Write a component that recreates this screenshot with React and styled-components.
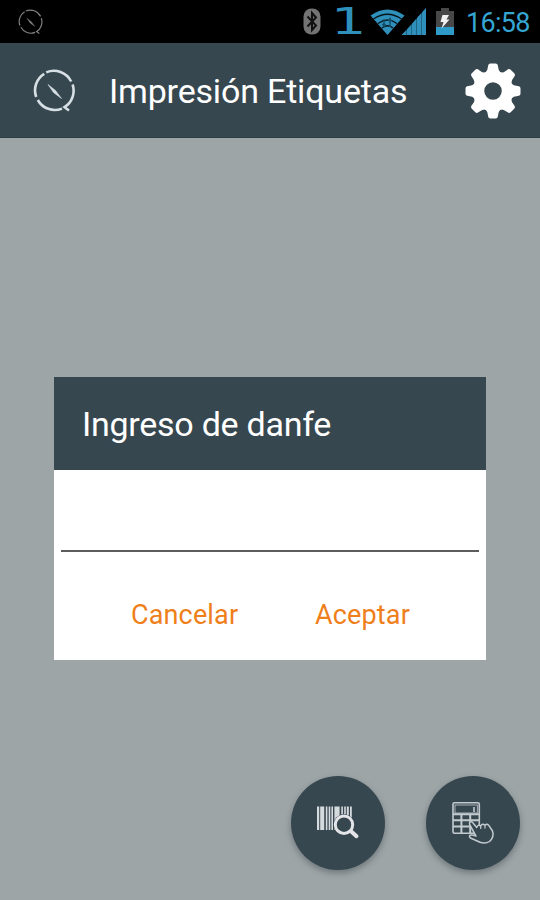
import React from 'react'
import styled, { createGlobalStyle } from 'styled-components'

const GlobalStyle = createGlobalStyle`
  * {
    box-sizing: border-box;
  }
  body {
    margin: 0;
    background: #9da5a7;
    font-family: Roboto, 'Liberation Sans', sans-serif;
  }
`

const Screen = styled.div`
  width: 540px;
  height: 900px;
  display: flex;
  flex-direction: column;
  background: #9da5a7;
  overflow: hidden;
`

const StatusBar = styled.div`
  height: 43px;
  flex: none;
  display: flex;
  align-items: center;
  padding: 0 10px 0 18px;
  background: #000;
  color: #35a5d3;
`

const StatusIcons = styled.div`
  display: flex;
  align-items: center;
  margin-left: auto;
`

const Slot = styled.span`
  display: flex;
  align-items: center;
  justify-content: center;
  width: 27px;
  height: 43px;
  margin: 0 8px 0 14px;
  color: #2f91bb;
  font-family: 'DejaVu Sans', sans-serif;
  font-size: 37px;
  line-height: 43px;
`

const SlotNumber = styled.span`
  transform: scaleX(1.5);
`

const Clock = styled.span`
  width: 64px;
  margin-left: 12px;
  font-size: 27px;
  line-height: 43px;
  padding-top: 3px;
  letter-spacing: -0.7px;
  white-space: nowrap;
`

const AppBar = styled.header`
  height: 95px;
  flex: none;
  display: flex;
  align-items: center;
  padding: 1px 19px 0 33px;
  background: #37474f;
  border-bottom: 1px solid #2c3e46;
`

const Title = styled.h1`
  flex: 1;
  margin: 0 0 0 32px;
  padding-top: 1px;
  color: #fff;
  font-size: 34px;
  font-weight: 400;
  line-height: 40px;
  letter-spacing: -0.18px;
  white-space: nowrap;
`

const Content = styled.main`
  flex: 1;
  display: flex;
  flex-direction: column;
  justify-content: space-between;
  padding: 239px 20px 30px 54px;
`

const Dialog = styled.section`
  width: 432px;
  height: 283px;
  background: #fff;
`

const DialogTitle = styled.h2`
  height: 93px;
  margin: 0;
  padding: 1px 28px 0;
  background: #37474f;
  color: #fff;
  font-size: 34px;
  font-weight: 400;
  line-height: 93px;
  letter-spacing: -0.26px;
  white-space: nowrap;
`

const Input = styled.input`
  display: block;
  width: 418px;
  height: 82px;
  margin: 0 7px;
  padding: 0 4px;
  border: 0;
  border-bottom: 2px solid #5c5c5c;
  outline: none;
  background: transparent;
  font: 30px Roboto, sans-serif;
`

const Actions = styled.div`
  display: flex;
  gap: 76px;
  padding: 45px 0 0 77px;
`

const Action = styled.button`
  width: ${props => props.$width};
  padding: 0;
  border: 0;
  background: none;
  color: #ef7f1a;
  font: 27px/36px Roboto, sans-serif;
  letter-spacing: 0.15px;
  text-align: left;
  white-space: nowrap;
`

const FabRow = styled.div`
  display: flex;
  justify-content: flex-end;
  gap: 41px;
`

const Fab = styled.button`
  width: 94px;
  height: 94px;
  padding: 0;
  border: 0;
  border-radius: 50%;
  background: #37474f;
  box-shadow: 0 3px 6px rgba(40, 50, 55, 0.4);
`

const Icon = styled.svg`
  display: block;
  flex: none;
  margin-left: ${props => props.$left || '0'};
`

const Logo = ({ size, color, weight }) => (
  <Icon width={size} height={size} viewBox='0 0 44 44' fill='none' stroke={color} strokeWidth={weight}>
    <path d='M13.2 3.4A19.5 19.5 0 0 1 38.2 12.5' />
    <path d='M39.6 15.5A19.5 19.5 0 0 1 31.5 38.2L36 41.5' />
    <path d='M29 39.6A19.5 19.5 0 0 1 4.8 31' />
    <path d='M3.2 28A19.5 19.5 0 0 1 11.2 4.8' />
    <path d='M15 15.5L20.5 23.5L28.5 29.5L22.5 21.5Z' fill={color} strokeWidth='0.6' />
  </Icon>
)

const Bluetooth = () => (
  <Icon width='18' height='27' viewBox='0 0 18 27'>
    <rect x='0.5' y='0.5' width='17' height='26' rx='8' fill='#737373' />
    <path d='M4.5 8.5L13 17.5L9 22V5L13 9.5L4.5 18.5' fill='none' stroke='#111' strokeWidth='2' />
  </Icon>
)

const Wifi = () => (
  <Icon width='35' height='26' viewBox='0 0 35 26'>
    <path d='M0.5 6.5Q17.5 -5.5 34.5 6.5L17.5 26Z' fill='#2f91bb' />
    <g fill='none' stroke='#06151c' strokeWidth='1.3'>
      <path d='M3.5 10Q17.5 0.5 31.5 10' />
      <path d='M8 14.5Q17.5 7.5 27 14.5' />
      <path d='M12 19Q17.5 14.5 23 19' />
    </g>
    <path d='M14 10V17M12.5 15L14 17.5L15.5 15M20 18V10M18.5 12L20 9.5L21.5 12' fill='none' stroke='#15516c' strokeWidth='1.5' />
  </Icon>
)

const Signal = () => (
  <Icon $left='-3px' width='24' height='27' viewBox='0 0 24 27'>
    <path d='M0 27L24 0V27Z' fill='#1d6485' />
    <g fill='#2f91bb'>
      <path d='M0 27V26.5L4 22.5V27Z' />
      <path d='M5 27V21.4L9 16.9V27Z' />
      <path d='M10 27V15.8L14 11.3V27Z' />
      <path d='M15 27V10.1L19 5.6V27Z' />
      <path d='M20 27V4.5L24 0V27Z' />
    </g>
  </Icon>
)

const Battery = () => (
  <Icon $left='10px' width='18' height='27' viewBox='0 0 18 27'>
    <path d='M5 0H13V3H18V27H0V3H5Z' fill='#484848' />
    <path d='M0 19H18V27H0Z' fill='#2f9bc8' />
    <path d='M6.5 7H13L10.5 11.5H13.5L5.5 20.5L7.5 14H4.5Z' fill='#f2f2f2' />
  </Icon>
)

const Gear = () => (
  <Icon width='56' height='56' viewBox='-28 -28 56 56'>
    {[0, 45, 90, 135, 180, 225, 270, 315].map(angle => (
      <path
        key={angle}
        transform={`rotate(${angle})`}
        d='M-7.8 -18Q-5.2 -20.5 -5 -24.5Q-4.8 -27.5 -2.5 -27.5H2.5Q4.8 -27.5 5 -24.5Q5.2 -20.5 7.8 -18Z'
        fill='#fff'
      />
    ))}
    <circle r='14.5' fill='none' stroke='#fff' strokeWidth='11.5' />
  </Icon>
)

const BarcodeSearch = () => (
  <Icon width='94' height='94' viewBox='0 0 94 94'>
    <g fill='#d5dadd'>
      <rect x='26' y='30.5' width='2.2' height='23.5' />
      <rect x='29.2' y='30.5' width='4' height='23.5' />
      <rect x='34.8' y='30.5' width='1.6' height='23.5' />
      <rect x='37.7' y='30.5' width='1.6' height='23.5' />
      <rect x='40.4' y='30.5' width='1.6' height='23.5' />
      <rect x='43.4' y='30.5' width='5.2' height='23.5' />
      <rect x='50.3' y='30.5' width='1.6' height='8' />
      <rect x='53.2' y='30.5' width='1.6' height='8' />
      <rect x='55.8' y='30.5' width='2' height='9' />
      <rect x='59' y='30.5' width='1.8' height='12' />
    </g>
    <circle cx='53' cy='48.7' r='10.5' fill='#37474f' />
    <path d='M60 55.2L65.5 60.2' stroke='#e4e5e8' strokeWidth='4' strokeLinecap='round' />
    <circle cx='53' cy='48.7' r='8.7' fill='#37474f' stroke='#e4e5e8' strokeWidth='3' />
  </Icon>
)

const CalculatorTouch = () => (
  <Icon width='94' height='94' viewBox='0 0 94 94' fill='none' stroke='#c3cbd0' strokeWidth='1.6'>
    <rect x='27' y='26.7' width='26.3' height='30.6' rx='1.5' />
    <rect x='29' y='29' width='22.3' height='8' strokeWidth='0.8' />
    <path d='M48 31V36' />
    <path d='M27 38.2H53.3M27 44.3H53.3M27 50.6H48M35.4 38V57.5M44.2 38V57.5' strokeWidth='2' />
    <path
      d='M48.5 57.3L43.6 48.3Q43 45.6 45.2 45.8Q46.4 45.9 47.2 47.2L50.7 51.5Q52 48 54.7 50Q56.2 46.8 59 49.2Q61.2 47 63.3 50.2L66.5 55Q68.5 61 63.5 65.5Q59.5 68.2 54 66.3L45 62.3Q42.5 60.5 44 59.3Q46 58.6 50 60L48.5 57.3Z'
      fill='#37474f'
      strokeWidth='1.5'
      strokeLinejoin='round'
    />
    <path d='M54.7 50V53M59 49.2V52.5' strokeWidth='1.2' />
  </Icon>
)

const App = () => {
  return (
    <>
      <GlobalStyle />
      <Screen>
        <StatusBar>
          <Logo size={26} color='#808080' weight={2} />
          <StatusIcons>
            <Bluetooth />
            <Slot><SlotNumber>1</SlotNumber></Slot>
            <Wifi />
            <Signal />
            <Battery />
            <Clock>16:58</Clock>
          </StatusIcons>
        </StatusBar>
        <AppBar>
          <Logo size={44} color='#d5dfe4' weight={2.6} />
          <Title>Impresión Etiquetas</Title>
          <Gear />
        </AppBar>
        <Content>
          <Dialog>
            <DialogTitle>Ingreso de danfe</DialogTitle>
            <Input />
            <Actions>
              <Action $width='108px'>Cancelar</Action>
              <Action $width='96px'>Aceptar</Action>
            </Actions>
          </Dialog>
          <FabRow>
            <Fab><BarcodeSearch /></Fab>
            <Fab><CalculatorTouch /></Fab>
          </FabRow>
        </Content>
      </Screen>
    </>
  )
}

export default App
